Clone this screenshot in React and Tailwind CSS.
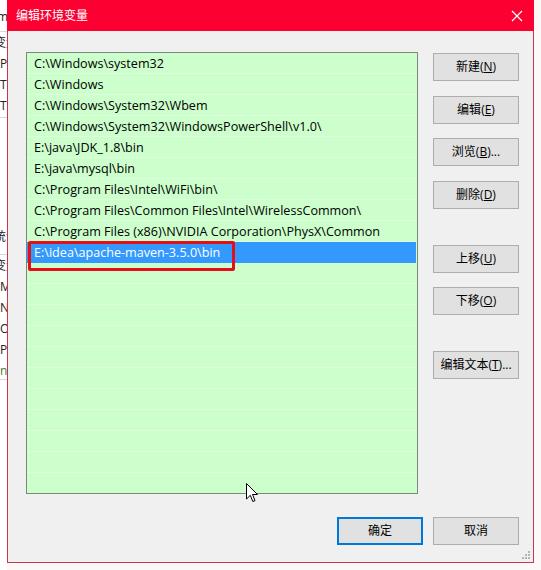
import React from 'react';

const font = { fontFamily: '"Open Sans", "Noto Sans CJK SC", sans-serif' };

const paths = [
  'C:\\Windows\\system32',
  'C:\\Windows',
  'C:\\Windows\\System32\\Wbem',
  'C:\\Windows\\System32\\WindowsPowerShell\\v1.0\\',
  'E:\\java\\JDK_1.8\\bin',
  'E:\\java\\mysql\\bin',
  'C:\\Program Files\\Intel\\WiFi\\bin\\',
  'C:\\Program Files\\Common Files\\Intel\\WirelessCommon\\',
  'C:\\Program Files (x86)\\NVIDIA Corporation\\PhysX\\Common',
  'E:\\idea\\apache-maven-3.5.0\\bin',
];

function Btn({ label, keyChar, tail = '', className = '' }) {
  return (
    <button className={`w-[86px] h-[28px] bg-[#e1e1e1] border border-[#adadad] text-[12px] text-black flex items-center justify-center ${className}`}>
      {label}(<span className="underline">{keyChar}</span>){tail}
    </button>
  );
}

// what shows of the window behind the dialog
function BackWindow() {
  return (
    <div className="w-[7px] h-full overflow-hidden bg-white text-[12px] text-[#222] leading-[21px] whitespace-nowrap">
      <div className="h-[32px] pt-[6px] -ml-[3px] border-b border-[#d8d8d8]">m</div>
      <div className="-ml-[6px]">变量</div>
      <div>Path</div>
      <div>TEMP</div>
      <div className="h-[23px] border-b border-[#d8d8d8]">TMP</div>
      <div className="h-[100px]" />
      <div className="h-[37px] pt-[8px] -ml-[6px] border-b border-[#d8d8d8]">统计</div>
      <div className="-ml-[6px]">变量</div>
      <div>MAVEN</div>
      <div>NUMBER</div>
      <div>OS</div>
      <div>Path</div>
      <div className="h-[20px] border-b border-[#d8d8d8] text-[#3a7a3a]">n/a</div>
    </div>
  );
}

export default function App() {
  const rows = Array.from({ length: 21 }, (_, i) => paths[i] || '');

  return (
    <div className="w-[541px] h-[570px] bg-[#fbf8f8] flex relative overflow-hidden" style={font}>
      <BackWindow />

      <div className="w-[527px] h-[563px] flex flex-col bg-[#f0f0f0] border-x border-b border-[#c8364e]">
        {/* title bar */}
        <div className="h-[31px] -mx-px bg-[#fb0031] flex items-center justify-between pl-[9px] pr-[11px] shrink-0">
          <span className="text-white text-[12px]">编辑环境变量</span>
          <svg width="12" height="12" viewBox="0 0 12 12">
            <path d="M1 1L11 11M11 1L1 11" stroke="#fff" strokeWidth="1.2" />
          </svg>
        </div>

        <div className="flex pt-[21px] pl-[18px]">
          {/* path list */}
          <div className="relative w-[392px] h-[442px] border border-[#7a8a7a] bg-[#ccffcc] overflow-hidden">
            {rows.map((p, i) => (
              <div
                key={i}
                className={`h-[21px] pl-[7px] pt-[2px] flex items-center text-[12.6px] whitespace-nowrap border-b ${
                  i === 9 ? 'bg-[#3399ff] text-white border-[#3399ff] mr-px' : 'text-black border-[#ddffdd]'
                }`}
              >
                {p}
              </div>
            ))}
            <div className="absolute left-[1px] top-[188px] w-[207px] h-[30px] border-[3px] border-[#e3101c] rounded-[2px]" />
          </div>

          {/* side buttons */}
          <div className="ml-[15px] pt-[1px] flex flex-col">
            <Btn label="新建" keyChar="N" />
            <Btn label="编辑" keyChar="E" className="mt-[15px]" />
            <Btn label="浏览" keyChar="B" tail="..." className="mt-[14px]" />
            <Btn label="删除" keyChar="D" className="mt-[15px]" />
            <Btn label="上移" keyChar="U" className="mt-[36px]" />
            <Btn label="下移" keyChar="O" className="mt-[14px]" />
            <Btn label="编辑文本" keyChar="T" tail="..." className="mt-[36px]" />
          </div>
        </div>

        {/* dialog buttons */}
        <div className="flex justify-end gap-[10px] mt-[23px] pr-[14px]">
          <button className="w-[86px] h-[28px] bg-[#e1e1e1] border-2 border-[#0078d7] text-[12px] text-black">确定</button>
          <button className="w-[86px] h-[28px] bg-[#e1e1e1] border border-[#adadad] text-[12px] text-black">取消</button>
        </div>

        <div className="flex justify-end pr-[2px] mt-[5px]">
          <svg width="10" height="10" viewBox="0 0 10 10">
            <g fill="#b5b5b5">
              <rect x="7" y="1" width="2" height="2" />
              <rect x="4" y="4" width="2" height="2" />
              <rect x="7" y="4" width="2" height="2" />
              <rect x="1" y="7" width="2" height="2" />
              <rect x="4" y="7" width="2" height="2" />
              <rect x="7" y="7" width="2" height="2" />
            </g>
          </svg>
        </div>
      </div>

      {/* mouse pointer */}
      <svg className="absolute left-[246px] top-[483px]" width="13" height="20" viewBox="0 0 13 20">
        <path d="M0.5 0.5L0.5 16L4.3 12.3L6.8 18.5L9 17.6L6.5 11.5L11.5 11.5Z" fill="#fff" stroke="#000" strokeWidth="1" />
      </svg>
    </div>
  );
}
